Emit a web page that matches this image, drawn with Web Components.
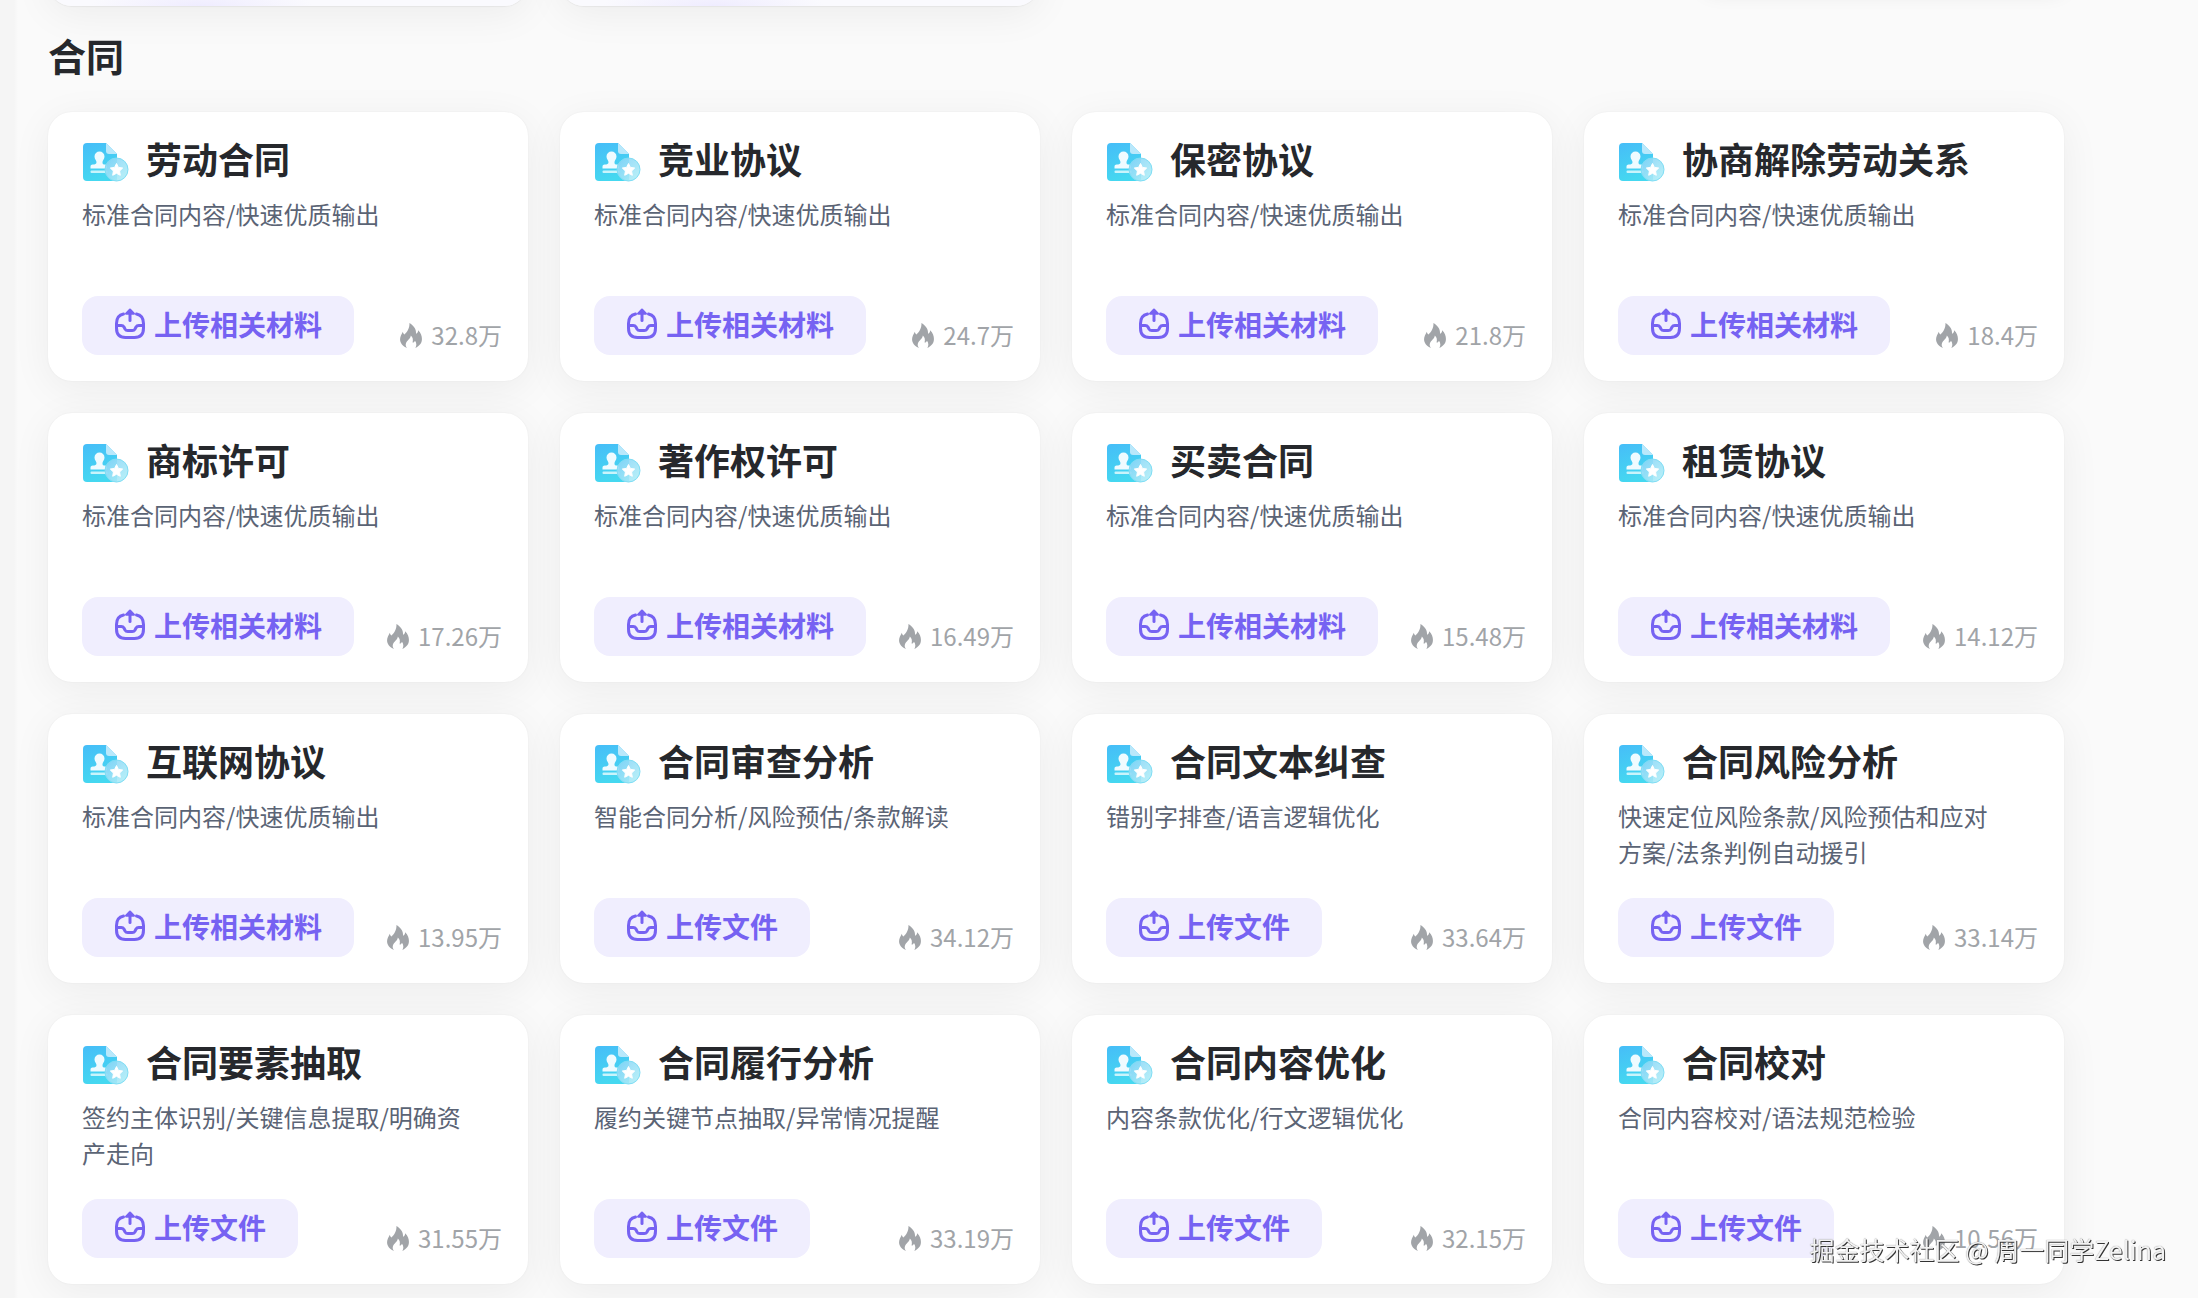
<!DOCTYPE html>
<html lang="zh-CN">
<head>
<meta charset="utf-8">
<title>合同</title>
<style>
  body {
    margin: 0;
    background: #fafafa linear-gradient(to right, #f5f5f5 14px, #fafafa 18px);
    color: #26282c;
    font-family: "Noto Sans CJK SC", sans-serif;
  }
</style>
</head>
<body>
<template-page></template-page>

<script>
const DEFAULT_DESC = "标准合同内容/快速优质输出";
const UPLOAD_MATERIAL = "上传相关材料";
const UPLOAD_FILE = "上传文件";

const CONTRACTS = [
  ["劳动合同", DEFAULT_DESC, UPLOAD_MATERIAL, "32.8万"],
  ["竞业协议", DEFAULT_DESC, UPLOAD_MATERIAL, "24.7万"],
  ["保密协议", DEFAULT_DESC, UPLOAD_MATERIAL, "21.8万"],
  ["协商解除劳动关系", DEFAULT_DESC, UPLOAD_MATERIAL, "18.4万"],
  ["商标许可", DEFAULT_DESC, UPLOAD_MATERIAL, "17.26万"],
  ["著作权许可", DEFAULT_DESC, UPLOAD_MATERIAL, "16.49万"],
  ["买卖合同", DEFAULT_DESC, UPLOAD_MATERIAL, "15.48万"],
  ["租赁协议", DEFAULT_DESC, UPLOAD_MATERIAL, "14.12万"],
  ["互联网协议", DEFAULT_DESC, UPLOAD_MATERIAL, "13.95万"],
  ["合同审查分析", "智能合同分析/风险预估/条款解读", UPLOAD_FILE, "34.12万"],
  ["合同文本纠查", "错别字排查/语言逻辑优化", UPLOAD_FILE, "33.64万"],
  ["合同风险分析", "快速定位风险条款/风险预估和应对方案/法条判例自动援引", UPLOAD_FILE, "33.14万"],
  ["合同要素抽取", "签约主体识别/关键信息提取/明确资产走向", UPLOAD_FILE, "31.55万"],
  ["合同履行分析", "履约关键节点抽取/异常情况提醒", UPLOAD_FILE, "33.19万"],
  ["合同内容优化", "内容条款优化/行文逻辑优化", UPLOAD_FILE, "32.15万"],
  ["合同校对", "合同内容校对/语法规范检验", UPLOAD_FILE, "10.56万"],
];

class ContractIcon extends HTMLElement {
  constructor() {
    super();
    this.attachShadow({ mode: "open" });
    this.shadowRoot.innerHTML = `
      <style>
        :host { display: block; flex: none; }
        svg { display: block; }
      </style>
      <svg width="47" height="40" viewBox="0 0 47 40" aria-hidden="true">
        <defs>
          <linearGradient id="doc" x1="0" y1="0" x2="0.3" y2="1">
            <stop offset="0" stop-color="#46bdf8"/>
            <stop offset="1" stop-color="#45d8f0"/>
          </linearGradient>
          <linearGradient id="seal" x1="0" y1="0" x2="1" y2="1">
            <stop offset="0" stop-color="#86d2f7"/>
            <stop offset="1" stop-color="#b4f1f7"/>
          </linearGradient>
        </defs>
        <path d="M5 1h19l11 11v27H5a4 4 0 0 1-4-4V5a4 4 0 0 1 4-4z" fill="url(#doc)"/>
        <path d="M24 1l11 11h-8a3 3 0 0 1-3-3z" fill="#b9e8fb"/>
        <path d="M17.500 9.500a5 5 0 0 1 5 5c0 2.500-1.800 3.700-2 5.500-.2 1.800.6 2.500 2.500 2.600 1.500.1 2 .8 2 2.400v1.500H8.500V25c0-1.600.6-2.300 2.200-2.400 2.200-.1 4-.7 3.800-2.600-.2-1.800-2-3-2-5.500a5 5 0 0 1 5-5z" fill="#effbff"/>
        <rect x="8.500" y="28.500" width="17" height="2.500" rx="1" fill="#c9f4fb"/>
        <circle cx="34.500" cy="27.500" r="11.500" fill="url(#seal)" fill-opacity="0.9" stroke="#7fddf4"/>
        <path d="M34.500 21.500l1.900 3.900 4.300.6-3.100 3 .7 4.300-3.800-2-3.800 2 .7-4.300-3.100-3 4.300-.6z" fill="#fff" stroke="#fff" stroke-linejoin="round"/>
      </svg>
    `;
  }
}

class UploadButton extends HTMLElement {
  constructor() {
    super();
    this.attachShadow({ mode: "open" });
    this.shadowRoot.innerHTML = `
      <style>
        :host { display: block; }
        button {
          display: flex;
          align-items: center;
          gap: 8px;
          height: 59px;
          padding: 0 32px 3px;
          border: 0;
          border-radius: 16px;
          background: #f0eefe;
          color: #7662f2;
          font: inherit;
          font-size: 28px;
          font-weight: 700;
          white-space: nowrap;
          cursor: pointer;
        }
        svg { display: block; flex: none; }
      </style>
      <button type="button">
        <svg width="32" height="32" viewBox="0 0 32 32" fill="none" stroke="currentColor" stroke-width="3" stroke-linecap="round" stroke-linejoin="round" aria-hidden="true">
          <path d="M9.500 6C4.500 7 2.500 10 2.500 15.500v4.500c0 6.300 3 9.500 9 9.500h9c6 0 9-3.200 9-9.500v-4.500c0-5.500-2-8.500-7-9.500"/>
          <path d="M2.500 17.500h4.800c1.200 0 2.100.6 2.700 1.600l1 1.800c.6 1 1.500 1.600 2.700 1.600h4.600c1.200 0 2.100-.6 2.700-1.600l1-1.800c.6-1 1.500-1.600 2.700-1.600h4.800"/>
          <path d="M16 5v7.500"/>
          <path d="M16 1.500l4 4.300h-8z" fill="currentColor" stroke-width="2"/>
        </svg>
        <slot></slot>
      </button>
    `;
  }
}

class HeatCount extends HTMLElement {
  constructor() {
    super();
    this.attachShadow({ mode: "open" });
    this.shadowRoot.innerHTML = `
      <style>
        :host {
          display: flex;
          align-items: center;
          gap: 9px;
          color: #a1a4a8;
          font-size: 24px;
          line-height: 40px;
          white-space: nowrap;
        }
        svg { display: block; }
      </style>
      <svg width="22" height="25" viewBox="0 0 63 72" fill="currentColor" aria-hidden="true">
        <path d="M27 0C40 8 47 18 46 31C50 29 52 26 52 21C60 29 63 37 63 46C63 58 56 66 44 72C48 65 48 58 43 51C41 55 39 57 36 56C38 48 37 41 31 36C30 46 20 50 17 58C15 64 17 68 20 72C8 67 0 59 0 47C0 39 4 33 8 25C9 29 10 31 13 33C21 25 28 14 27 0Z"/>
      </svg>
      <span><slot></slot></span>
    `;
  }
}

class ContractCard extends HTMLElement {
  constructor() {
    super();
    this.attachShadow({ mode: "open" });
    this.shadowRoot.innerHTML = `
      <style>
        :host { display: block; }
        article {
          display: flex;
          flex-direction: column;
          box-sizing: border-box;
          min-height: 269px;
          height: 100%;
          padding: 20px 26px 26px 34px;
          border-radius: 24px;
          background: #fff;
          box-shadow: 0 0 2px rgba(0, 0, 0, 0.06), 0 8px 40px rgba(0, 0, 0, 0.06);
        }
        header {
          display: flex;
          align-items: center;
          gap: 17px;
          height: 52px;
        }
        contract-icon { margin-top: 8px; }
        h3 {
          margin: 0;
          font-size: 36px;
          font-weight: 700;
          line-height: 52px;
          white-space: nowrap;
        }
        p {
          margin: 12px 32px 0 0;
          color: #5b6475;
          font-size: 24px;
          line-height: 36px;
        }
        footer {
          display: flex;
          align-items: flex-end;
          justify-content: space-between;
          margin-top: auto;
        }
      </style>
      <article>
        <header>
          <contract-icon></contract-icon>
          <h3><slot name="title"></slot></h3>
        </header>
        <p><slot></slot></p>
        <footer>
          <upload-button><slot name="action"></slot></upload-button>
          <heat-count><slot name="heat"></slot></heat-count>
        </footer>
      </article>
    `;
  }
}

// Lower edge of the section that is scrolled out above this one
class PreviousSection extends HTMLElement {
  constructor() {
    super();
    this.attachShadow({ mode: "open" });
    this.shadowRoot.innerHTML = `
      <style>
        :host {
          display: grid;
          grid-template-columns: repeat(4, 1fr);
          grid-template-rows: 6px;
          gap: 32px;
          align-items: end;
        }
        div {
          height: 60px;
          border-radius: 24px;
          background: radial-gradient(110px 20px at 32% 100%, #efecff, #fafafe);
          box-shadow: 0 1px 1px rgba(0, 0, 0, 0.05), 0 8px 40px rgba(0, 0, 0, 0.06);
        }
        .shade {
          grid-column: 4;
          height: 20px;
          margin: 0 0 14px 120px;
          background: none;
          box-shadow: 0 0 20px rgba(0, 0, 0, 0.1);
        }
      </style>
      <div></div>
      <div></div>
      <div class="shade"></div>
    `;
  }
}

class WaterMark extends HTMLElement {
  constructor() {
    super();
    this.attachShadow({ mode: "open" });
    this.shadowRoot.innerHTML = `
      <style>
        :host {
          position: fixed;
          right: 32px;
          bottom: 31px;
          color: #f2f2f2;
          font-size: 25px;
          line-height: 36px;
          text-shadow: 1px 1px 0 #333, 0 0 1px rgba(0, 0, 0, 0.5);
          white-space: nowrap;
          pointer-events: none;
        }
      </style>
      <slot></slot>
    `;
  }
}

class TemplatePage extends HTMLElement {
  constructor() {
    super();
    this.attachShadow({ mode: "open" });
    this.shadowRoot.innerHTML = `
      <style>
        :host { display: block; }
        main { padding: 0 134px 14px 48px; }
        h2 {
          position: relative;
          margin: 24px 0 32px;
          font-size: 38px;
          font-weight: 700;
          line-height: 50px;
        }
        .grid {
          display: grid;
          grid-template-columns: repeat(auto-fill, minmax(440px, 1fr));
          gap: 32px;
        }
      </style>
      <main>
        <previous-section></previous-section>
        <h2>合同</h2>
        <div class="grid"></div>
      </main>
      <water-mark>掘金技术社区 @ 周一同学Zelina</water-mark>
    `;
  }

  connectedCallback() {
    this.shadowRoot.querySelector(".grid").innerHTML = CONTRACTS.map(
      ([title, desc, action, heat]) => `
        <contract-card>
          <span slot="title">${title}</span>
          ${desc}
          <span slot="action">${action}</span>
          <span slot="heat">${heat}</span>
        </contract-card>
      `
    ).join("");
  }
}

customElements.define("contract-icon", ContractIcon);
customElements.define("upload-button", UploadButton);
customElements.define("heat-count", HeatCount);
customElements.define("contract-card", ContractCard);
customElements.define("previous-section", PreviousSection);
customElements.define("water-mark", WaterMark);
customElements.define("template-page", TemplatePage);
</script>
</body>
</html>
